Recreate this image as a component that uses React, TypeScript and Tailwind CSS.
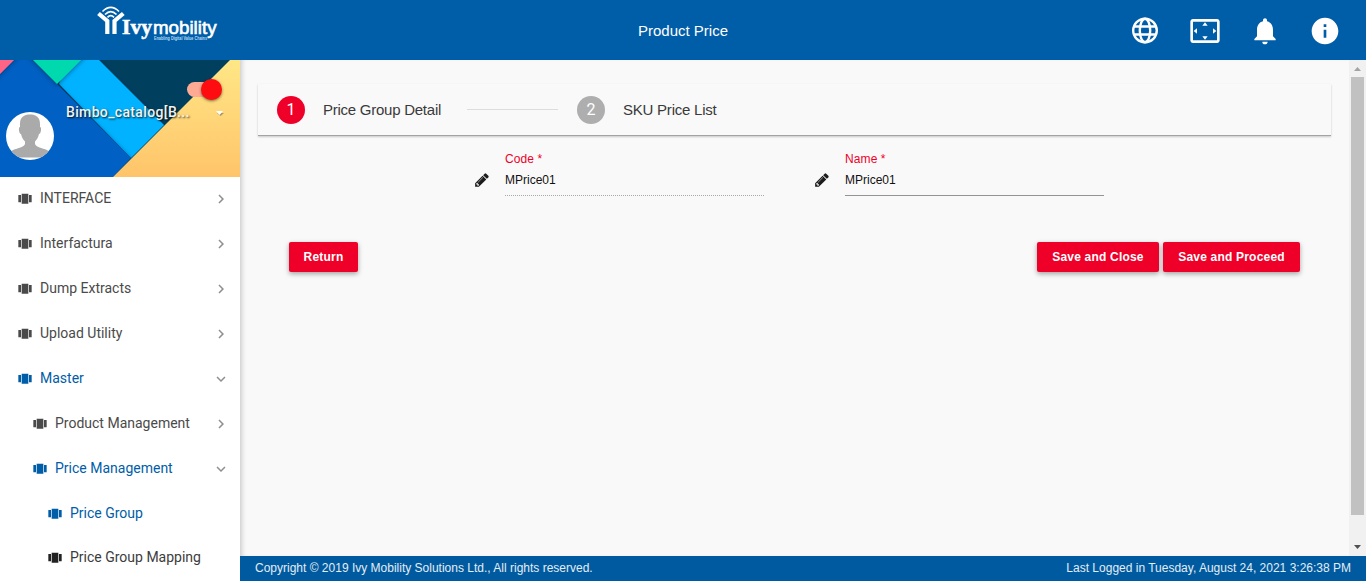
import React from "react";
import {
  MdSettingsOverscan,
  MdNotifications,
  MdInfo,
  MdChevronRight,
  MdExpandMore,
} from "react-icons/md";

const roboto = "font-['Roboto','Liberation_Sans',sans-serif]";

function Logo() {
  return (
    <div className="ml-[97px] mt-[6px] flex h-[37px] w-[121px]">
      <svg viewBox="0 0 121 37" width="121" height="37" fill="none">
        <path d="M1.500 7.500 10.300 15V28M26.300 7.500 17.500 15V28" stroke="#fff" strokeWidth="4.200" />
        <path d="M5.500 5.500Q13.800-2.600 22 5.500M8 8.500Q13.800 2.800 19.500 8.500M10.500 11.300Q13.800 8 17 11.300" stroke="#fff" strokeWidth="1.700" />
        <text x="25" y="27.500" textLength="30" lengthAdjust="spacingAndGlyphs" fill="#fff" stroke="#fff" strokeWidth=".5" className="font-['Liberation_Serif',serif] text-[20px] font-bold">Ivy</text>
        <text x="56" y="27.500" textLength="63.500" lengthAdjust="spacingAndGlyphs" fill="#fff" stroke="#fff" strokeWidth=".6" className="font-['Liberation_Sans',sans-serif] text-[18px]">mobility</text>
        <text x="57" y="34.300" textLength="53" lengthAdjust="spacingAndGlyphs" fill="#b9dcf5" className="font-['Liberation_Sans',sans-serif] text-[4.500px] font-bold">Enabling Digital Value Chains</text>
      </svg>
    </div>
  );
}

function Globe() {
  return (
    <svg width="32" height="32" viewBox="0 0 32 32" fill="none" stroke="#fff" strokeWidth="2.400">
      <circle cx="16" cy="15.500" r="11.800" />
      <ellipse cx="16" cy="15.500" rx="5.200" ry="11.800" />
      <path d="M5 11.500H27M5 19.500H27" />
    </svg>
  );
}

function Carousel({ className }: { className: string }) {
  return (
    <svg width="16" height="16" viewBox="0 0 24 24" fill="currentColor" className={`shrink-0 ${className}`}>
      <path d="M7 19h10V4H7v15zM2 17h4V6H2v11zM18 6v11h4V6h-4z" />
    </svg>
  );
}

function BannerArt() {
  return (
    <svg className="absolute inset-0" width="240" height="117" viewBox="0 0 240 117">
      <defs>
        <linearGradient id="sand" x1="0" y1="0" x2="0" y2="1">
          <stop offset="0" stopColor="#ffe786" />
          <stop offset="1" stopColor="#ffc46a" />
        </linearGradient>
        <filter id="edge" x="-20%" y="-20%" width="140%" height="140%">
          <feDropShadow dx="0" dy="1" stdDeviation="2" floodColor="#001b40" floodOpacity=".55" />
        </filter>
      </defs>
      <rect width="240" height="117" fill="#00405e" />
      <path d="M72 -10H89L99 0 164 65 131 98 59 24Z" fill="#00b2ff" filter="url(#edge)" />
      <path d="M-20 -20H12L33 0 131 98 108 122H-20Z" fill="#0061c3" filter="url(#edge)" />
      <path d="M23 -10 33 0 57 24 81 0 91 -10Z" fill="#00d8ae" filter="url(#edge)" />
      <path d="M-5 -5H19L14 0 0 14 -5 19Z" fill="#ff6386" filter="url(#edge)" />
      <path d="M113 117 230 0H240V117Z" fill="url(#sand)" />
    </svg>
  );
}

function Profile() {
  return (
    <div className="relative h-[117px] shrink-0 overflow-hidden">
      <BannerArt />
      <div className="absolute left-[187px] top-[22px] h-[15px] w-[34px] rounded-full bg-[#ffab94]" />
      <div className="absolute left-[201px] top-[19px] size-[21px] rounded-full bg-[#ff0c10] shadow-[0_1px_3px_rgba(0,0,0,.55)]" />
      <div className="absolute left-[66px] top-[43px] text-[14px] font-medium leading-[18px] tracking-[0.35px] whitespace-nowrap text-[#f2f2f2] [text-shadow:1px_1px_2px_rgba(0,0,0,.8)]">
        Bimbo_catalog[B...
      </div>
      <svg className="absolute left-[215px] top-[50px]" width="10" height="6" viewBox="0 0 10 6">
        <path d="M2 3h7L5.500 6Z" fill="#555" opacity=".5" />
        <path d="M1 1h7L4.500 5Z" fill="#fff" />
      </svg>
      <svg className="absolute left-[6px] top-[52px]" width="48" height="48" viewBox="0 0 48 48">
        <clipPath id="avatar"><circle cx="24" cy="24" r="24" /></clipPath>
        <circle cx="24" cy="24" r="24" fill="#fff" />
        <g clipPath="url(#avatar)" fill="#aaa">
          <path d="M14 12C14 5 18 2.500 24 2.500S34 5 34 12V15C36 15 35 22 33 22 32 26 30.500 28 29 29.500V32C30 35 36 36 41 38 44 40 44 42 42.500 43.500 39 45.500 36 45.500 34 45.500H14C12 45.500 9 45.500 5.500 43.500 4 42 4 40 7 38 12 36 18 35 19 32V29.500C17.500 28 16 26 15 22 13 22 12 15 14 15Z" />
        </g>
      </svg>
    </div>
  );
}

type Item = { label: string; level: 0 | 1 | 2; tone: "grey" | "blue" | "dark"; open?: boolean };

const items: Item[] = [
  { label: "INTERFACE", level: 0, tone: "grey", open: false },
  { label: "Interfactura", level: 0, tone: "grey", open: false },
  { label: "Dump Extracts", level: 0, tone: "grey", open: false },
  { label: "Upload Utility", level: 0, tone: "grey", open: false },
  { label: "Master", level: 0, tone: "blue", open: true },
  { label: "Product Management", level: 1, tone: "grey", open: false },
  { label: "Price Management", level: 1, tone: "blue", open: true },
  { label: "Price Group", level: 2, tone: "blue" },
  { label: "Price Group Mapping", level: 2, tone: "dark" },
];

const indent = ["pl-[17px]", "pl-[32px]", "pl-[47px]"];
const tones = { grey: "text-[#4a4a4a]", blue: "text-[#005da8]", dark: "text-[#222]" };

function MenuRow({ item }: { item: Item }) {
  const Arrow = item.open ? MdExpandMore : MdChevronRight;
  return (
    <div className={`flex shrink-0 items-center pr-[10px] ${item.level === 2 ? "h-[44px]" : "h-[45px]"} ${indent[item.level]} ${tones[item.tone]}`}>
      <Carousel className={item.level === 2 ? "" : "-mt-[1px]"} />
      <span className={`ml-[7px] -mt-[3px] flex-1 text-[14px] leading-[20px] whitespace-nowrap ${item.tone === "dark" ? "text-[#3c3c3c]" : ""}`}>{item.label}</span>
      {item.open !== undefined && <Arrow size={18} className="-mt-[2px] text-[#8f8f8f]" />}
    </div>
  );
}

function Pencil() {
  return (
    <svg width="16" height="16" viewBox="0 0 1792 1792" fill="#1c1c1c" className="mt-[22px] shrink-0">
      <path d="M491 1536l91-91-235-235-91 91v107h128v128h107zm523-928q0-22-22-22-10 0-17 7l-542 542q-7 7-7 17 0 22 22 22 10 0 17-7l542-542q7-7 7-17zm-54-192l416 416-832 832h-416v-416zm683 96q0 53-37 90l-166 166-416-416 166-165q36-38 90-38 53 0 91 38l235 234q37 39 37 91z" />
    </svg>
  );
}

function Field({ label, value, disabled }: { label: string; value: string; disabled?: boolean }) {
  return (
    <div className="flex w-[340px] text-[12px]">
      <Pencil />
      <div className={`ml-[15px] h-[46px] w-[259px] border-b ${disabled ? "border-dotted border-[#aaa]" : "border-[#949494]"}`}>
        <div className="mt-[2px] leading-[14px] tracking-[0.1px] text-[#ef0029]">{label} *</div>
        <div className="mt-[7px] leading-[14px] text-[#111]">{value}</div>
      </div>
    </div>
  );
}

function Button({ children, width }: { children: string; width: string }) {
  return (
    <button className={`${width} h-[30px] rounded-[2px] bg-[#ef0029] text-[12px] font-bold tracking-[0.2px] whitespace-nowrap text-white shadow-[0_2px_5px_rgba(0,0,0,.35)]`}>
      {children}
    </button>
  );
}

function Step({ n, label, active }: { n: number; label: string; active?: boolean }) {
  return (
    <div className="flex items-center">
      <span className={`flex size-[28px] items-center justify-center rounded-full text-[16px] text-white ${roboto} ${active ? "bg-[#ef0029]" : "bg-[#aeaeae]"}`}>{n}</span>
      <span className={`ml-[18px] text-[15px] leading-[20px] whitespace-nowrap text-[#3a3a3a] ${active ? "w-[118px] tracking-[-0.25px]" : "tracking-[-0.23px]"}`}>{label}</span>
    </div>
  );
}

export default function App() {
  return (
    <div className="flex h-[581px] w-[1366px] flex-col overflow-hidden bg-[#f9f9f9] font-['Liberation_Sans',Arial,sans-serif]">
      <header className="flex h-[60px] shrink-0 bg-[#005da8] text-white">
        <div className="w-[600px]"><Logo /></div>
        <div className="flex w-[166px] items-center justify-center pt-[2px] text-[15px]">Product Price</div>
        <div className="flex flex-1 items-center justify-end gap-[28px] pr-[25px] pt-px">
          <Globe />
          <MdSettingsOverscan size={32} />
          <MdNotifications size={32} />
          <MdInfo size={32} />
        </div>
      </header>
      <div className="flex min-h-0 flex-1">
        <aside className={`z-10 flex w-[240px] shrink-0 flex-col bg-white ${roboto}`}>
          <Profile />
          {items.map((item) => <MenuRow key={item.label} item={item} />)}
        </aside>
        <div className="flex flex-1 flex-col">
          <div className="flex min-h-0 flex-1 shadow-[inset_5px_0_5px_-3px_rgba(0,0,0,.18)]">
            <main className="flex-1 pl-[18px] pt-[24px]">
              <div className="flex h-[52px] w-[1073px] items-center border-b border-[#a3a3a3] pl-[19px] shadow-[0_1px_2px_rgba(0,0,0,.2)]">
                <Step n={1} label="Price Group Detail" active />
                <div className="ml-[26px] mr-[19px] h-px w-[91px] bg-[#ddd]" />
                <Step n={2} label="SKU Price List" />
              </div>
              <div className="ml-[216px] mt-[14px] flex">
                <Field label="Code" value="MPrice01" disabled />
                <Field label="Name" value="MPrice01" />
              </div>
              <div className="ml-[31px] mt-[46px] flex w-[1011px]">
                <Button width="w-[69px]">Return</Button>
                <div className="ml-auto flex gap-[4px]">
                  <Button width="w-[122px]">Save and Close</Button>
                  <Button width="w-[137px]">Save and Proceed</Button>
                </div>
              </div>
            </main>
            <div className="flex w-[17px] flex-col items-center bg-[#f1f1f1]">
              <svg width="17" height="17" viewBox="0 0 17 17"><path d="M5 11h7L8.500 7Z" fill="#a3a3a3" /></svg>
              <div className="h-[438px] w-[13px] bg-[#c1c1c1]" />
              <svg className="mt-auto" width="17" height="17" viewBox="0 0 17 17"><path d="M5 6h7L8.500 10Z" fill="#505050" /></svg>
            </div>
          </div>
          <footer className="flex h-[25px] shrink-0 items-center justify-between bg-[#005a9f] px-[15px] pb-[2px] text-[12px] text-[#e3edf5]">
            <span>Copyright © 2019 Ivy Mobility Solutions Ltd., All rights reserved.</span>
            <span>Last Logged in Tuesday, August 24, 2021 3:26:38 PM</span>
          </footer>
        </div>
      </div>
    </div>
  );
}
